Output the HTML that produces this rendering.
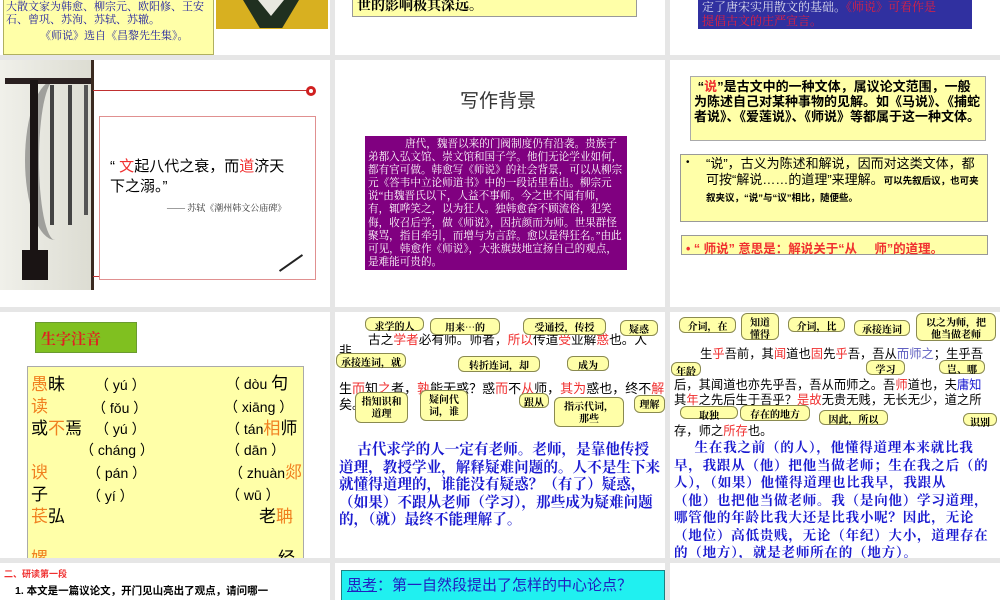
<!DOCTYPE html>
<html><head><meta charset="utf-8"><style>
*{margin:0;padding:0;box-sizing:border-box}
body{width:1000px;height:600px;overflow:hidden;background:#e6e6e6;position:relative;font-family:"Liberation Sans","Noto Sans CJK SC",sans-serif}
.t{position:absolute;background:#fff;overflow:hidden}
.a{position:absolute;white-space:nowrap}
.s{font-family:"Liberation Serif","Noto Serif CJK SC",serif}
.c{position:absolute;background:#ffffa8;border:1px solid #8a8a50;border-radius:6px;font-size:10px;font-weight:bold;text-align:center;line-height:12px;padding-top:2px;color:#000;font-family:"Noto Serif CJK SC",serif;white-space:nowrap}
.r{color:#f03030}.o{color:#f08020}.b{color:#1a1ad0}
.py{position:absolute;font-size:14px;white-space:nowrap;line-height:18px}
.hz{position:absolute;font-size:17px;white-space:nowrap;line-height:20px}
</style></head><body>
<!-- row1 -->
<div class="t" style="left:0;top:0;width:330px;height:55px">
 <div class="a" style="left:3px;top:0;width:211px;height:55px;background:#ffffa8;border:1px solid #b0b060;border-top:none"></div>
 <div class="a s" style="left:6px;top:1px;font-size:11px;line-height:13px;color:#2020a0">大散文家为韩愈、柳宗元、欧阳修、王安<br>石、曾巩、苏洵、苏轼、苏辙。</div>
 <div class="a s" style="left:40px;top:30px;font-size:11px;line-height:13px;color:#2020a0">《师说》选自《昌黎先生集》。</div>
 <div class="a" style="left:216px;top:0;width:112px;height:29px;background:#d8b020"></div>
 <div class="a" style="left:243px;top:0;width:56px;height:28px;background:#203020;clip-path:polygon(0 0,100% 0,70% 100%,30% 100%)"></div>
 <div class="a" style="left:258px;top:0;width:26px;height:16px;background:#e8e8e0;clip-path:polygon(0 0,100% 0,50% 100%)"></div>
</div>
<div class="t" style="left:335px;top:0;width:330px;height:55px">
 <div class="a s" style="left:17px;top:0;width:285px;height:17px;background:#ffffa8;border:1px solid #999;border-top:none;font-size:14px;font-weight:bold;line-height:14px;padding-left:4px">世的影响极其深远。</div>
</div>
<div class="t" style="left:670px;top:0;width:330px;height:55px">
 <div class="a s" style="left:28px;top:0;width:274px;height:29px;background:#3030a0;font-size:12px;line-height:14px;padding-left:4px;color:#dde">定了唐宋实用散文的基础。<span style="color:#e02040">《师说》可看作是</span><br><span style="color:#e02040">提倡古文的庄严宣言。</span></div>
</div>
<!-- row2 -->
<div class="t" style="left:0;top:60px;width:330px;height:247px">
 <div class="a" style="left:0;top:0;width:93px;height:230px;background:linear-gradient(90deg,#f0f0ea,#dcdcd2)"></div>
 <div class="a" style="left:25px;top:20px;width:60px;height:160px;border-radius:50%;border-left:14px solid #5a5a5a;opacity:.5"></div>
 <div class="a" style="left:5px;top:18px;width:86px;height:6px;background:#2a2020"></div>
 <div class="a" style="left:30px;top:20px;width:8px;height:200px;background:#1a1414"></div>
 <div class="a" style="left:22px;top:190px;width:26px;height:30px;background:#1a1414"></div>
 <div class="a" style="left:50px;top:25px;width:4px;height:140px;background:#444"></div>
 <div class="a" style="left:68px;top:25px;width:4px;height:140px;background:#444"></div>
 <div class="a" style="left:84px;top:25px;width:4px;height:130px;background:#555"></div>
 <div class="a" style="left:91px;top:0;width:3px;height:230px;background:#3a2a20"></div>
 <div class="a" style="left:93px;top:30px;width:215px;height:1px;background:#c03030"></div>
 <div class="a" style="left:306px;top:26px;width:10px;height:10px;border:3px solid #d02020;border-radius:50%"></div>
 <div class="a" style="left:93px;top:216px;width:7px;height:1px;background:#c03030"></div>
 <div class="a" style="left:99px;top:56px;width:217px;height:164px;border:1px solid #e09090"></div>
 <div class="a" style="left:110px;top:97px;font-size:15px;line-height:20px">“ <span class="r">文</span>起八代之衰，而<span class="r">道</span>济天<br>下之溺。”</div>
 <div class="a s" style="left:167px;top:141px;font-size:9px;color:#333">—— 苏轼《潮州韩文公庙碑》</div>
 <div class="a" style="left:277px;top:202px;width:28px;height:2px;background:#222;transform:rotate(-35deg)"></div>
</div>
<div class="t" style="left:335px;top:60px;width:330px;height:247px">
 <div class="a" style="left:125px;top:26px;font-size:19px;color:#333">写作背景</div>
 <div class="a s" style="left:30px;top:76px;width:262px;height:134px;background:#800080;color:#fff;font-size:10.6px;line-height:13.1px;white-space:normal;padding:2px 3px 0 3px">&nbsp;&nbsp;&nbsp;&nbsp;&nbsp;&nbsp;&nbsp;&nbsp;&nbsp;&nbsp;&nbsp;&nbsp;&nbsp;&nbsp;唐代，魏晋以来的门阀制度仍有沿袭。贵族子弟都入弘文馆、崇文馆和国子学。他们无论学业如何，都有官可做。韩愈写《师说》的社会背景，可以从柳宗元《答韦中立论师道书》中的一段话里看出。柳宗元说“由魏晋氏以下，人益不事师。今之世不闻有师，有，辄哗笑之，以为狂人。独韩愈奋不顾流俗，犯笑侮，收召后学，做《师说》，因抗颜而为师。世果群怪聚骂，指目牵引，而增与为言辞。愈以是得狂名。”由此可见，韩愈作《师说》，大张旗鼓地宣扬自己的观点，是难能可贵的。</div>
</div>
<div class="t" style="left:670px;top:60px;width:330px;height:247px">
 <div class="a" style="left:20px;top:16px;width:296px;height:65px;background:#ffffa8;border:1px solid #aaa;font-size:13px;font-weight:bold;line-height:15px;padding:2px 3px;white-space:normal">&nbsp;“<span class="r">说</span>”是古文中的一种文体，属议论文范围，一般为陈述自己对某种事物的见解。如《马说》、《捕蛇者说》、《爱莲说》、《师说》等都属于这一种文体。</div>
 <div class="a" style="left:10px;top:94px;width:308px;height:68px;background:#ffffa8;border:1px solid #999"></div>
 <div class="a" style="left:16px;top:97px;font-size:10px">•</div>
 <div class="a" style="left:36px;top:96px;font-size:13px;line-height:15.5px;white-space:normal;width:280px">“说”，古义为陈述和解说，因而对这类文体，都可按“解说……的道理”来理解。<span style="font-size:9.5px;font-weight:bold">可以先叙后议，也可夹叙夹议，“说”与“议”相比，随便些。</span></div>
 <div class="a r" style="left:11px;top:175px;width:307px;height:20px;background:#ffffa8;border:1px solid #999;font-size:12.5px;font-weight:bold;padding:2px 4px">• “ 师说” 意思是：解说关于“从&nbsp;&nbsp;&nbsp;&nbsp;&nbsp;师”的道理。</div>
</div>
<!-- row3 -->
<div class="t" style="left:0;top:312px;width:330px;height:246px">
 <div class="a" style="left:35px;top:10px;width:102px;height:31px;background:#80c020;border:1px solid #6a9a30;color:#e02020;font-weight:bold;font-size:15px;padding:5px 0 0 5px;font-family:'Noto Serif CJK SC',serif">生字注音</div>
 <div class="a" style="left:27px;top:54px;width:277px;height:200px;background:#ffffa8;border:1px solid #aaa"></div>
 <div class="hz" style="left:31px;top:63px"><span class="o">愚</span>昧</div>
 <div class="hz" style="left:31px;top:85px"><span class="o">读</span></div>
 <div class="hz" style="left:31px;top:107px">或<span class="o">不</span>焉</div>
 <div class="hz" style="left:31px;top:151px"><span class="o">谀</span></div>
 <div class="hz" style="left:31px;top:173px">子</div>
 <div class="hz" style="left:31px;top:195px"><span class="o">苌</span>弘</div>
 <div class="py" style="left:95px;top:64px">（ yú ）</div>
 <div class="py" style="left:92px;top:87px">（ fǒu ）</div>
 <div class="py" style="left:95px;top:108px">（ yú ）</div>
 <div class="py" style="left:80px;top:129px">（ cháng ）</div>
 <div class="py" style="left:87px;top:152px">（ pán ）</div>
 <div class="py" style="left:87px;top:175px">（ yí ）</div>
 <div class="py" style="left:226px;top:63px">（ dòu <span style="font-size:17px">句</span></div>
 <div class="py" style="left:224px;top:86px">（ xiāng ）</div>
 <div class="py" style="left:226px;top:108px">（ tán<span class="o" style="font-size:17px">相</span><span style="font-size:17px">师</span></div>
 <div class="py" style="left:226px;top:129px">（ dān ）</div>
 <div class="py" style="left:229px;top:152px">（ zhuàn<span class="o" style="font-size:17px">郯</span></div>
 <div class="py" style="left:226px;top:174px">（ wū ）</div>
 <div class="hz" style="left:259px;top:195px">老<span class="o">聃</span></div>
 <div class="a o" style="left:31px;top:232px;font-size:17px">嫘</div>
 <div class="a" style="left:278px;top:232px;font-size:17px">经</div>
</div>
<div class="t" style="left:335px;top:312px;width:330px;height:246px">
 <div class="a" style="left:33px;top:17px;font-size:12.7px">古之<span class="r">学者</span>必有师。师者，<span class="r">所以</span>传道<span class="r">受</span>业解<span class="r">惑</span>也。人</div>
 <div class="a" style="left:4px;top:28px;font-size:12.7px">非</div>
 <div class="a" style="left:4px;top:66px;font-size:13px">生<span class="r">而</span>知<span class="r">之</span>者，<span class="r">孰</span>能无惑？惑<span class="r">而</span>不<span class="r">从</span>师，<span class="r">其为</span>惑也，终不<span class="r">解</span></div>
 <div class="a" style="left:4px;top:82px;font-size:13px">矣。</div>
 <div class="c" style="left:30px;top:5px;width:59px;height:14px">求学的人</div>
 <div class="c" style="left:95px;top:6px;width:70px;height:17px">用来…的</div>
 <div class="c" style="left:188px;top:6px;width:83px;height:17px">受通授，传授</div>
 <div class="c" style="left:285px;top:8px;width:38px;height:16px">疑惑</div>
 <div class="c" style="left:1px;top:41px;width:70px;height:15px">承接连词，就</div>
 <div class="c" style="left:123px;top:44px;width:82px;height:16px">转折连词，却</div>
 <div class="c" style="left:232px;top:44px;width:42px;height:15px">成为</div>
 <div class="c" style="left:20px;top:80px;width:53px;height:31px">指知识和<br>道理</div>
 <div class="c" style="left:85px;top:78px;width:48px;height:31px">疑问代<br>词，谁</div>
 <div class="c" style="left:184px;top:81px;width:30px;height:15px">跟从</div>
 <div class="c" style="left:219px;top:85px;width:70px;height:30px">指示代词，<br>那些</div>
 <div class="c" style="left:299px;top:83px;width:31px;height:18px">理解</div>
 <div class="a b" style="left:4px;top:128px;font-size:14.6px;line-height:17.5px;font-weight:bold;font-family:'Noto Serif CJK SC',serif">&nbsp;&nbsp;&nbsp;&nbsp;&nbsp;古代求学的人一定有老师。老师，是靠他传授<br>道理，教授学业，解释疑难问题的。人不是生下来<br>就懂得道理的，谁能没有疑惑？（有了）疑惑，<br>（如果）不跟从老师（学习），那些成为疑难问题<br>的，（就）最终不能理解了。</div>
</div>
<div class="t" style="left:670px;top:312px;width:330px;height:246px">
 <div class="a" style="left:30px;top:32px;font-size:12.3px">生<span class="r">乎</span>吾前，其<span class="r">闻</span>道也<span class="r">固</span>先<span class="r">乎</span>吾，吾从<span style="color:#6060c0">而师之</span>；生乎吾</div>
 <div class="a" style="left:4px;top:63px;font-size:12.3px">后，其闻道也亦先乎吾，吾从而师之。吾<span class="r">师</span>道也，夫<span class="b">庸知</span></div>
 <div class="a" style="left:4px;top:78px;font-size:12.3px">其<span class="r">年</span>之先后生于吾乎？<span class="r">是故</span>无贵无贱，无长无少，道之所</div>
 <div class="a" style="left:4px;top:109px;font-size:12.3px">存，师之<span class="r">所存</span>也。</div>
 <div class="c" style="left:9px;top:5px;width:57px;height:16px">介词，在</div>
 <div class="c" style="left:71px;top:1px;width:38px;height:27px">知道<br>懂得</div>
 <div class="c" style="left:118px;top:5px;width:57px;height:15px">介词，比</div>
 <div class="c" style="left:184px;top:8px;width:56px;height:16px">承接连词</div>
 <div class="c" style="left:246px;top:1px;width:80px;height:28px">以之为师，把<br>他当做老师</div>
 <div class="c" style="left:1px;top:50px;width:30px;height:14px">年龄</div>
 <div class="c" style="left:196px;top:48px;width:39px;height:15px">学习</div>
 <div class="c" style="left:269px;top:48px;width:46px;height:14px">岂、哪</div>
 <div class="c" style="left:10px;top:94px;width:58px;height:13px">取独</div>
 <div class="c" style="left:70px;top:93px;width:70px;height:16px">存在的地方</div>
 <div class="c" style="left:149px;top:98px;width:69px;height:15px">因此，所以</div>
 <div class="c" style="left:293px;top:101px;width:34px;height:13px">识别</div>
 <div class="a b" style="left:4px;top:126px;font-size:13.6px;letter-spacing:0.7px;line-height:17.5px;font-weight:bold;font-family:'Noto Serif CJK SC',serif">&nbsp;&nbsp;&nbsp;&nbsp;&nbsp;生在我之前（的人），他懂得道理本来就比我<br>早，我跟从（他）把他当做老师；生在我之后（的<br>人），（如果）他懂得道理也比我早，我跟从<br>（他）也把他当做老师。我（是向他）学习道理，<br>哪管他的年龄比我大还是比我小呢？因此，无论<br>（地位）高低贵贱，无论（年纪）大小，道理存在<br>的（地方），就是老师所在的（地方）。</div>
</div>
<!-- row4 -->
<div class="t" style="left:0;top:563px;width:330px;height:37px">
 <div class="a r" style="left:4px;top:4px;font-size:9px;font-weight:bold">二、研读第一段</div>
 <div class="a" style="left:15px;top:20px;font-size:10.5px;font-weight:bold">1. 本文是一篇议论文，开门见山亮出了观点，请问哪一</div>
</div>
<div class="t" style="left:335px;top:563px;width:330px;height:37px">
 <div class="a" style="left:6px;top:7px;width:324px;height:32px;background:#20f0f0;border:1px solid #208080;color:#2020c0;font-size:15px;padding:3px 0 0 5px"><span style="text-decoration:underline">思考</span>：第一自然段提出了怎样的中心论点？</div>
</div>
<div class="t" style="left:670px;top:563px;width:330px;height:37px"></div>
</body></html>
